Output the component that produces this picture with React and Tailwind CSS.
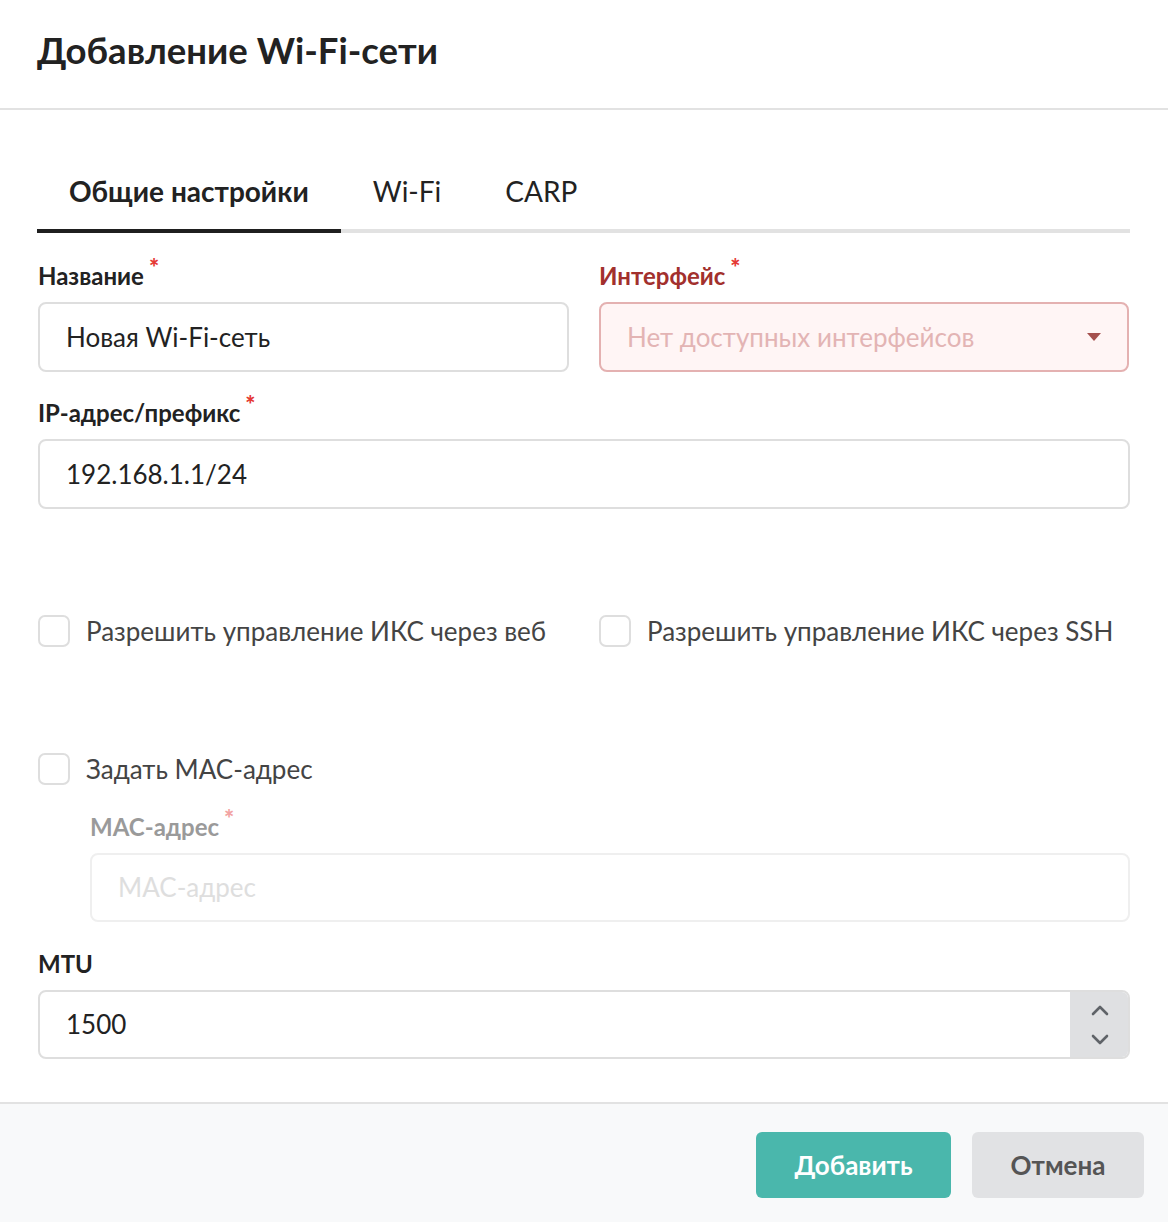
import React from "react";

function Req({ className = "text-[#e53935]" }) {
  return <span className={`ml-[5px] relative -top-[5px] text-[24px] leading-[24px] font-black ${className}`}>*</span>;
}

function Checkbox({ label }) {
  return (
    <label className="flex items-center gap-[16px]">
      <span className="w-[32px] h-[32px] rounded-[7px] border-2 border-[#dedede] bg-white shrink-0" />
      <span className="text-[26px] leading-[32px] text-[#444]">{label}</span>
    </label>
  );
}

export default function App() {
  return (
    <div className="w-[1168px] h-[1222px] bg-white flex flex-col text-[#222]" style={{ fontFamily: "Lato, 'Noto Sans', sans-serif" }}>
      {/* header */}
      <div className="h-[110px] border-b-2 border-[#e2e2e2] px-[37px] flex items-center shrink-0">
        <h1 className="text-[36.5px] font-bold leading-[44px] text-[#222] -mt-[8px]">Добавление Wi-Fi-сети</h1>
      </div>

      {/* body */}
      <div className="flex-1 px-[38px] pt-[40px]">
        {/* tabs */}
        <div className="flex border-b-4 border-[#e2e2e2] -ml-[1px]">
          <div className="px-[32px] pt-[24px] pb-[21px] -mb-[4px] border-b-4 border-[#1f1f1f] text-[28px] leading-[34px] font-bold">Общие настройки</div>
          <div className="px-[32px] pt-[24px] pb-[21px] text-[28px] leading-[34px]">Wi-Fi</div>
          <div className="px-[32px] pt-[24px] pb-[21px] text-[28px] leading-[34px]">CARP</div>
        </div>

        {/* name + interface */}
        <div className="grid grid-cols-2 gap-[30px] mt-[28px]">
          <div>
            <div className="text-[24px] leading-[30px] font-bold text-[#222] flex items-start">Название<Req /></div>
            <div className="mt-[11px] h-[70px] rounded-[8px] border-2 border-[#dedede] flex items-center px-[26px] text-[26px] text-[#222]">Новая Wi-Fi-сеть</div>
          </div>
          <div>
            <div className="text-[24px] leading-[30px] font-bold text-[#a2302d] flex items-start">Интерфейс<Req /></div>
            <div className="mt-[11px] h-[70px] w-[530px] rounded-[8px] border-2 border-[#e4b1b1] bg-[#fff5f5] flex items-center justify-between pl-[26px] pr-[26px] text-[26px] text-[#e3b4b4]">
              <span>Нет доступных интерфейсов</span>
              <svg width="14" height="8" viewBox="0 0 14 8"><path d="M0 0h14L7 8z" fill="#a5504e" /></svg>
            </div>
          </div>
        </div>

        {/* ip */}
        <div className="mt-[26px]">
          <div className="text-[24px] leading-[30px] font-bold flex items-start">IP-адрес/префикс<Req /></div>
          <div className="mt-[11px] h-[70px] rounded-[8px] border-2 border-[#dedede] flex items-center px-[26px] text-[26px]">192.168.1.1/24</div>
        </div>

        {/* access checkboxes */}
        <div className="grid grid-cols-2 gap-[30px] mt-[106px]">
          <Checkbox label="Разрешить управление ИКС через веб" />
          <Checkbox label="Разрешить управление ИКС через SSH" />
        </div>

        {/* mac */}
        <div className="mt-[106px]">
          <Checkbox label="Задать MAC-адрес" />
        </div>
        <div className="ml-[52px] mt-[27px]">
          <div className="text-[24px] leading-[30px] font-bold text-[#9a9a9a] flex items-start">MAC-адрес<Req className="text-[#f2a3a3]" /></div>
          <div className="mt-[11px] h-[69px] rounded-[8px] border-2 border-[#efefef] flex items-center px-[26px] text-[26px] text-[#dedede]">MAC-адрес</div>
        </div>

        {/* mtu */}
        <div className="mt-[27px]">
          <div className="text-[24px] leading-[30px] font-bold">MTU</div>
          <div className="mt-[11px] h-[69px] rounded-[8px] border-2 border-[#dedede] flex items-stretch text-[26px] overflow-hidden">
            <div className="flex-1 flex items-center px-[26px]">1500</div>
            <div className="w-[60px] -my-[2px] -mr-[2px] bg-[#dfe0e2] flex flex-col items-center justify-center gap-[18px]">
              <svg width="18" height="11" viewBox="0 0 18 11"><path d="M2 9l7-7 7 7" fill="none" stroke="#5f6368" strokeWidth="2.6" strokeLinecap="round" strokeLinejoin="round" /></svg>
              <svg width="18" height="11" viewBox="0 0 18 11"><path d="M2 2l7 7 7-7" fill="none" stroke="#5f6368" strokeWidth="2.6" strokeLinecap="round" strokeLinejoin="round" /></svg>
            </div>
          </div>
        </div>
      </div>

      {/* footer */}
      <div className="h-[120px] border-t-2 border-[#e2e2e2] bg-[#f8f9fa] flex items-start justify-end gap-[21px] pr-[24px] pt-[28px] shrink-0">
        <button className="w-[195px] h-[66px] rounded-[6px] bg-[#4ab7ac] text-white text-[26px] font-bold">Добавить</button>
        <button className="w-[172px] h-[66px] rounded-[6px] bg-[#e1e2e4] text-[#555] text-[26px] font-bold">Отмена</button>
      </div>
    </div>
  );
}
